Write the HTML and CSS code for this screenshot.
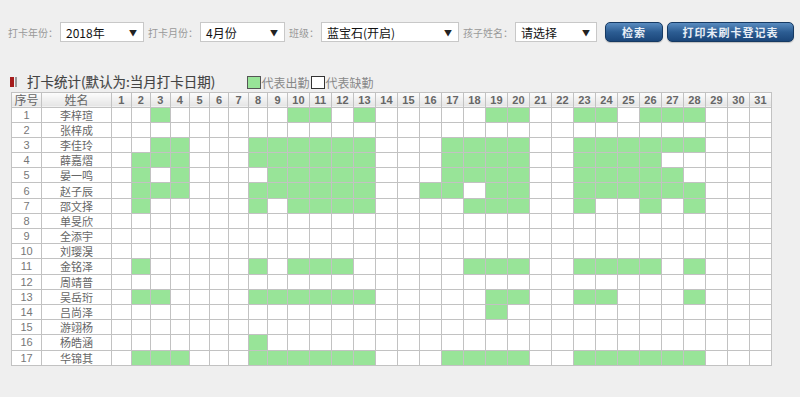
FILE: index.html
```html
<!DOCTYPE html>
<html lang="zh-CN">
<head>
  <meta charset="UTF-8">
  <meta name="viewport" content="width=device-width, initial-scale=1.0">
  <title>打卡统计</title>
  <link rel="stylesheet" href="styles.css">
</head>
<body>
  <div class="toolbar">
    <label>打卡年份：</label>
    <div class="select-box w-year"><span>2018年</span><span class="arrow">▼</span></div>
    <label>打卡月份：</label>
    <div class="select-box w-month"><span>4月份</span><span class="arrow">▼</span></div>
    <label>班级：</label>
    <div class="select-box w-class"><span>蓝宝石(开启)</span><span class="arrow">▼</span></div>
    <label>孩子姓名：</label>
    <div class="select-box w-child"><span>请选择</span><span class="arrow">▼</span></div>
    <button class="btn btn-search">检索</button>
    <button class="btn btn-print">打印未刷卡登记表</button>
  </div>

  <div class="title-bar">
    <span class="marker"></span>
    <h2>打卡统计(默认为:当月打卡日期)</h2>
    <span class="legend"><i class="box on"></i>代表出勤<i class="box off"></i>代表缺勤</span>
  </div>

  <table id="attendTable">
    <colgroup></colgroup>
    <thead>
      <tr><th class="head-cn">序号</th><th class="head-cn">姓名</th></tr>
    </thead>
    <tbody></tbody>
  </table>

  <script>
    const students = [
      ['李梓瑄', [3, 10, 11, 13, 19, 20, 23, 24, 26, 27, 28]],
      ['张梓成', []],
      ['李佳玲', [3, 4, 8, 9, 10, 11, 12, 13, 17, 18, 19, 20, 23, 24, 25, 26, 27, 28]],
      ['薛嘉熠', [2, 3, 4, 8, 9, 10, 11, 12, 13, 17, 18, 19, 20, 23, 24, 25, 26]],
      ['晏一鸣', [2, 4, 9, 10, 11, 12, 13, 17, 18, 19, 20, 23, 24, 25, 26, 27]],
      ['赵子辰', [2, 3, 4, 8, 9, 10, 11, 12, 13, 16, 17, 19, 20, 23, 24, 25, 26, 27, 28]],
      ['邵文择', [2, 8, 10, 11, 12, 13, 18, 19, 20, 23, 26, 28]],
      ['单旻欣', []],
      ['全添宇', []],
      ['刘璎淏', []],
      ['金铭泽', [2, 8, 10, 11, 12, 18, 19, 20, 23, 24, 25, 26, 28]],
      ['周靖普', []],
      ['吴岳珩', [2, 3, 8, 9, 10, 11, 12, 13, 19, 20, 23, 24, 28]],
      ['吕尚泽', [19]],
      ['游翊杨', []],
      ['杨皓涵', [8]],
      ['华锦其', [2, 3, 4, 8, 9, 10, 11, 12, 13, 17, 18, 19, 20, 23, 24, 25, 26, 27, 28]]
    ];

    const table = document.getElementById('attendTable');
    const colgroup = table.querySelector('colgroup');
    const headRow = table.querySelector('thead tr');
    const tbody = table.querySelector('tbody');

    colgroup.innerHTML = '<col class="c-no"><col class="c-name">';
    for (let d = 1; d <= 31; d++) {
      colgroup.innerHTML += `<col class="${d < 10 ? 'c-day1' : 'c-day2'}">`;
      headRow.innerHTML += `<th>${d}</th>`;
    }

    students.forEach(([name, days], i) => {
      const row = document.createElement('tr');
      let cells = `<td class="no">${i + 1}</td><td class="name">${name}</td>`;
      for (let d = 1; d <= 31; d++) {
        cells += `<td class="${days.includes(d) ? 'on' : ''}"></td>`;
      }
      row.innerHTML = cells;
      tbody.appendChild(row);
    });
  </script>
</body>
</html>
```

FILE: styles.css
```css
body {
  margin: 0;
  padding: 0;
  background-color: #efefef;
  font-family: "Noto Sans CJK SC", "Liberation Sans", sans-serif;
  color: #666;
}

.toolbar {
  display: flex;
  align-items: center;
  height: 20px;
  padding: 22px 0 0 8px;
}

.toolbar label {
  font-size: 10px;
  color: #999;
  margin-right: 2px;
  white-space: nowrap;
}

.select-box {
  display: flex;
  align-items: center;
  justify-content: space-between;
  box-sizing: border-box;
  height: 20px;
  padding: 0 6px 0 5px;
  margin-right: 4px;
  background-color: #fff;
  border: 1px solid #c8c8c8;
  font-size: 12px;
  color: #111;
}

.select-box .arrow {
  font-size: 8px;
  color: #222;
}

.w-year { width: 84px; }
.w-month { width: 85px; }
.w-class { width: 138px; }
.w-child { width: 82px; }

.btn {
  height: 20px;
  margin-left: 4px;
  padding: 0;
  border: 1px solid #163a63;
  border-radius: 5px;
  background: linear-gradient(#5a8cc0, #2c5d93 50%, #1b467a);
  box-shadow: 0 1px 1px rgba(0, 0, 0, 0.2);
  color: #e8eef6;
  font-family: "Noto Sans CJK SC", sans-serif;
  font-size: 11px;
  font-weight: bold;
  letter-spacing: 1px;
}

.btn-search { width: 58px; }
.btn-print { width: 127px; }

.title-bar {
  display: flex;
  align-items: flex-end;
  height: 18px;
  margin: 30px 0 0 10px;
}

.marker {
  width: 5px;
  height: 10px;
  margin-bottom: 3px;
  background-color: #a51c1c;
  border-right: 2px solid #999;
  box-shadow: inset -1px 0 0 #efefef;
}

.title-bar h2 {
  margin: 0 0 0 10px;
  font-size: 13.5px;
  font-weight: normal;
  line-height: 18px;
  color: #444;
  -webkit-text-stroke: 0.15px #444;
}

.legend {
  display: flex;
  align-items: flex-end;
  margin-left: 32px;
  font-size: 12px;
  line-height: 14px;
  color: #888;
}

.legend .box {
  display: inline-block;
  box-sizing: border-box;
  width: 14px;
  height: 13px;
  margin-bottom: 1px;
}

.legend .on {
  background-color: #98e498;
  border: 1px solid #555;
}

.legend .off {
  margin-left: 2px;
  background-color: #fff;
  border: 1px solid #333;
}

table {
  width: 760px;
  margin: 1.5px 0 0 11px;
  table-layout: fixed;
  border-collapse: collapse;
  background-color: #fff;
}

col.c-no { width: 30px; }
col.c-name { width: 70px; }
col.c-day1 { width: 19.56px; }
col.c-day2 { width: 22px; }

th, td {
  border: 1px solid #c2c2c2;
  padding: 0;
  text-align: center;
  overflow: hidden;
  white-space: nowrap;
}

th {
  height: 14px;
  line-height: 14px;
  background: linear-gradient(#fdfdfd, #e4e4e4);
  font-family: "Liberation Sans", sans-serif;
  font-size: 11px;
  font-weight: bold;
  color: #666;
}

th.head-cn {
  font-family: "Noto Sans CJK SC", sans-serif;
  font-weight: normal;
  font-size: 12px;
  color: #666;
}

td {
  height: 14.2px;
  line-height: 14px;
}

td.no {
  font-family: "Liberation Sans", sans-serif;
  font-size: 11px;
  color: #777;
}

td.name {
  font-size: 11px;
  color: #666;
}

td.on {
  background-color: #98e498;
}
```
